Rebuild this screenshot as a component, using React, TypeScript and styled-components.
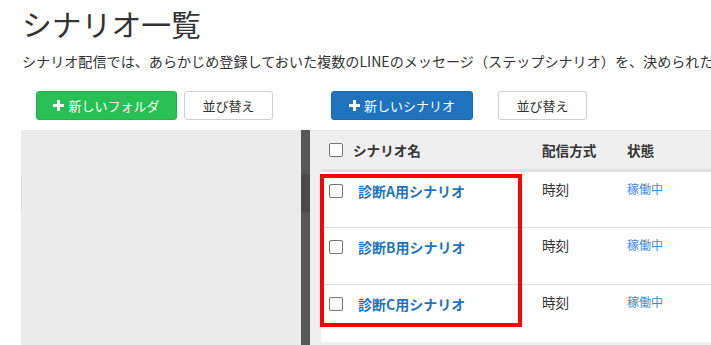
import React from "react";
import styled, { createGlobalStyle } from "styled-components";

const Global = createGlobalStyle`
  html, body { margin: 0; padding: 0; background: #fff; }
  body {
    font-family: "Noto Sans CJK JP", "Noto Sans", sans-serif;
    color: #333;
    width: 711px;
    height: 345px;
    overflow: hidden;
  }
`;

const Page = styled.div`
  padding-left: 21px;
  width: 711px;
  height: 345px;
  box-sizing: border-box;
  overflow: hidden;
`;

const Title = styled.h1`
  margin: 2px 0 0 1px;
  font-size: 29.8px;
  font-weight: 400;
  line-height: 42px;
  color: #333;
`;

const Lead = styled.p`
  margin: 7px 0 0 1px;
  font-size: 14.1px;
  line-height: 20px;
  white-space: nowrap;
  color: #333;
`;

const Toolbar = styled.div`
  display: flex;
  margin-top: 20px;
  height: 29px;
`;

const ToolGroup = styled.div<{ $w?: number; $pl: number; $gap: number }>`
  display: flex;
  gap: ${(p) => p.$gap}px;
  padding-left: ${(p) => p.$pl}px;
  width: ${(p) => (p.$w ? `${p.$w}px` : "auto")};
  box-sizing: border-box;
  flex-shrink: 0;
`;

const Button = styled.button<{ $variant: "green" | "blue" | "plain"; $w: number }>`
  width: ${(p) => p.$w}px;
  height: 29px;
  box-sizing: border-box;
  border-radius: 3px;
  font-family: inherit;
  font-size: 13px;
  display: flex;
  align-items: center;
  justify-content: center;
  gap: 4px;
  padding: 0;
  cursor: pointer;
  ${(p) =>
    p.$variant === "green"
      ? `background:#28bf55;border:1px solid #22b24d;color:#fff;`
      : p.$variant === "blue"
      ? `background:#1f73bd;border:1px solid #1b6ab0;color:#fff;`
      : `background:#fff;border:1px solid #cfcfcf;color:#333;`}
`;

const Plus = () => (
  <svg width="11" height="11" viewBox="0 0 11 11">
    <path d="M4 0h3v4h4v3H7v4H4V7H0V4h4z" fill="#fff" />
  </svg>
);

const Body = styled.div`
  display: flex;
  margin-top: 10px;
  height: 215px;
`;

const FolderPane = styled.div`
  width: 280px;
  flex-shrink: 0;
  background: #ebebeb;
  padding-top: 45px;
  box-sizing: border-box;
`;

const FolderMark = styled.div`
  height: 37px;
  border-left: 1px solid #dadada;
`;

const Handle = styled.div`
  width: 9px;
  flex-shrink: 0;
  background: #575757;
  padding-top: 45px;
  box-sizing: border-box;
`;

const Grip = styled.div`
  height: 37px;
  background: #4a4a4a;
`;

const ListPane = styled.div`
  flex: 1;
  position: relative;
  background: #efefef;
  border-top: 1px solid #e4e4e4;
  padding-left: 11px;
  min-width: 0;
`;

const Table = styled.table`
  width: 420px;
  border-collapse: collapse;
  table-layout: fixed;
`;

const HeadCell = styled.th<{ $w: number }>`
  width: ${(p) => p.$w}px;
  height: 38px;
  text-align: left;
  font-size: 13.6px;
  font-weight: 700;
  color: #333;
  padding: 0;
  border-bottom: 3px solid #e0e0e0;
  vertical-align: middle;
`;

const Row = styled.tr`
  background: #fff;
  & + & td { border-top: 1px solid #dedede; }
`;

const Cell = styled.td`
  height: 57px;
  padding: 0;
  vertical-align: top;
  box-sizing: border-box;
`;

const CellInner = styled.div<{ $pt: number; $gap: number }>`
  display: flex;
  align-items: center;
  gap: ${(p) => p.$gap}px;
  padding-top: ${(p) => p.$pt}px;
`;

const Check = styled.span`
  display: inline-block;
  width: 12px;
  height: 12px;
  border: 1px solid #767676;
  border-radius: 2px;
  background: #fff;
  flex-shrink: 0;
  margin-left: 8px;
`;

const NameLink = styled.a`
  color: #1f73bd;
  font-weight: 700;
  font-size: 14px;
  text-decoration: none;
`;

const Plain = styled.span`
  color: #333;
  font-size: 13.6px;
`;

const Status = styled.span`
  color: #3b8bd0;
  font-size: 12px;
`;

const Annotation = styled.div`
  position: absolute;
  left: 10px;
  top: 43px;
  width: 202px;
  height: 153px;
  border: 4px solid #ff0000;
  box-sizing: border-box;
  pointer-events: none;
`;

const rows = ["診断A用シナリオ", "診断B用シナリオ", "診断C用シナリオ"];

export default function App() {
  return (
    <>
      <Global />
      <Page>
        <Title>シナリオ一覧</Title>
        <Lead>
          シナリオ配信では、あらかじめ登録しておいた複数のLINEのメッセージ（ステップシナリオ）を、決められたタイミングで配信することができます。
        </Lead>
        <Toolbar>
          <ToolGroup $w={289} $pl={15} $gap={7}>
            <Button $variant="green" $w={141}>
              <Plus />
              新しいフォルダ
            </Button>
            <Button $variant="plain" $w={89}>並び替え</Button>
          </ToolGroup>
          <ToolGroup $pl={21} $gap={25}>
            <Button $variant="blue" $w={142}>
              <Plus />
              新しいシナリオ
            </Button>
            <Button $variant="plain" $w={89}>並び替え</Button>
          </ToolGroup>
        </Toolbar>
        <Body>
          <FolderPane>
            <FolderMark />
          </FolderPane>
          <Handle>
            <Grip />
          </Handle>
          <ListPane>
            <Table>
              <thead>
                <tr>
                  <HeadCell $w={221}>
                    <CellInner $pt={0} $gap={10}>
                      <Check />
                      <span>シナリオ名</span>
                    </CellInner>
                  </HeadCell>
                  <HeadCell $w={85}>配信方式</HeadCell>
                  <HeadCell $w={114}>状態</HeadCell>
                </tr>
              </thead>
              <tbody>
                {rows.map((r) => (
                  <Row key={r}>
                    <Cell>
                      <CellInner $pt={9} $gap={15}>
                        <Check />
                        <NameLink href="#">{r}</NameLink>
                      </CellInner>
                    </Cell>
                    <Cell>
                      <CellInner $pt={7} $gap={0}>
                        <Plain>時刻</Plain>
                      </CellInner>
                    </Cell>
                    <Cell>
                      <CellInner $pt={8} $gap={0}>
                        <Status>稼働中</Status>
                      </CellInner>
                    </Cell>
                  </Row>
                ))}
              </tbody>
            </Table>
            <Annotation />
          </ListPane>
        </Body>
      </Page>
    </>
  );
}
